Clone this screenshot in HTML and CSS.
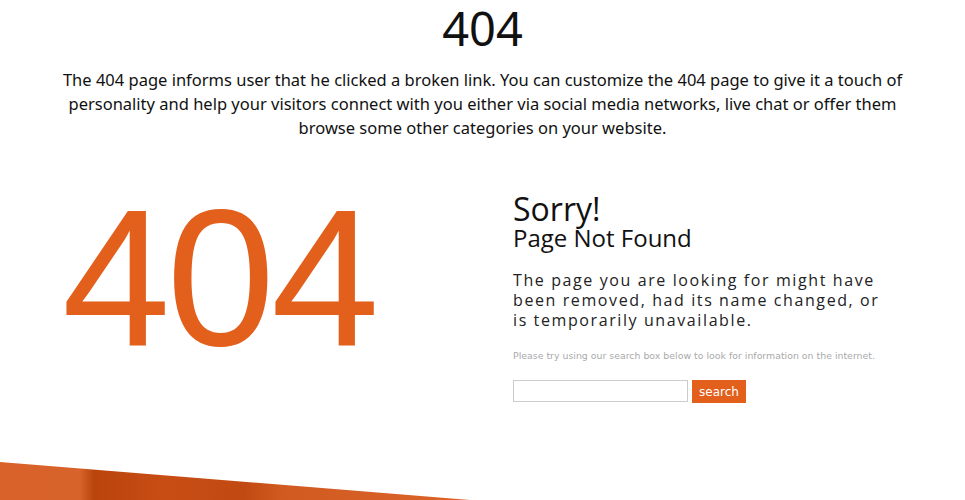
FILE: index.html
```html
<!DOCTYPE html>
<html lang="en">

<head>
    <meta charset="UTF-8">
    <meta name="viewport" content="width=device-width, initial-scale=1.0">
    <title>404 Page</title>
    <link rel="stylesheet" href="styles.css">
</head>

<body>
    <div class="intro">
        <h1 class="intro-title">404</h1>
        <p class="intro-text">The 404 page informs user that he clicked a broken link. You can customize the 404 page to give it a touch of personality and help your visitors connect with you either via social media networks, live chat or offer them browse some other categories on your website.</p>
    </div>

    <div class="error-box">
        <div class="error-code">404</div>
        <div class="error-info">
            <h2 class="sorry">Sorry!</h2>
            <h3 class="not-found">Page Not Found</h3>
            <p class="message">The page you are looking for might have been removed, had its name changed, or is temporarily unavailable.</p>
            <p class="hint">Please try using our search box below to look for information on the internet.</p>
            <form class="search" onsubmit="return false;">
                <input type="text" class="search-input">
                <button class="search-btn">search</button>
            </form>
        </div>
    </div>

    <div class="footer-wave"></div>
</body>

</html>
```

FILE: styles.css
```css
body, html {
    margin: 0;
    padding: 0;
    background-color: #fff;
    color: #111;
    height: 100%;
    overflow: hidden;
}

body {
    position: relative;
}

.intro {
    text-align: center;
    font-family: "Noto Sans", sans-serif;
}

.intro-title {
    margin: 0;
    padding-top: 2px;
    font-size: 47px;
    font-weight: normal;
    line-height: 52px;
}

.intro-text {
    margin: 14px auto 0;
    width: 880px;
    font-size: 16.5px;
    line-height: 24px;
}

.error-box {
    display: grid;
    grid-template-columns: 513px 1fr;
    margin-top: 53px;
}

.error-code {
    font-family: "Liberation Sans", Arial, sans-serif;
    font-size: 195px;
    line-height: 1;
    letter-spacing: -4px;
    color: #e35f1c;
    padding-left: 62px;
    margin-top: -13px;
}

.error-info {
    font-family: "Open Sans", sans-serif;
}

.sorry {
    margin: 0;
    font-size: 32px;
    font-weight: normal;
    line-height: 31px;
}

.not-found {
    margin: 0;
    font-size: 24px;
    font-weight: normal;
    line-height: 28px;
}

.message {
    margin: 18px 0 0;
    width: 380px;
    font-size: 16px;
    line-height: 20px;
    letter-spacing: 1.6px;
    color: #222;
}

.hint {
    margin: 20px 0 0;
    font-family: "DejaVu Sans", sans-serif;
    font-size: 9.4px;
    color: #aaa;
}

.search {
    display: flex;
    gap: 4px;
    margin-top: 19px;
}

.search-input {
    width: 171px;
    height: 18px;
    padding: 1px;
    border: 1px solid #ccc;
    margin: 0;
}

.search-btn {
    height: 23px;
    width: 54px;
    border: none;
    background: #e35f1c;
    color: #fff;
    font-family: "DejaVu Sans", sans-serif;
    font-size: 12px;
    padding: 0;
    cursor: pointer;
}

.footer-wave {
    position: absolute;
    left: 0;
    bottom: 0;
    width: 470px;
    height: 40px;
    clip-path: polygon(0 2px, 100% 40px, 0 40px);
    background: linear-gradient(90deg, #d9622a 0%, #d7632a 17%, #b9440c 20%, #c84d15 35%, #c14a12 52%, #d05a20 60%, #db6429 100%);
}
```
